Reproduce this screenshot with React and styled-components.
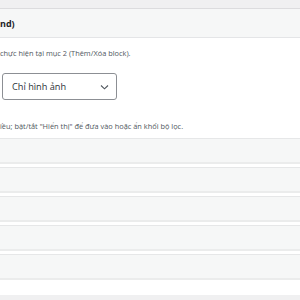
import React from "react";
import styled, { createGlobalStyle } from "styled-components";

const Global = createGlobalStyle`
  html, body { margin: 0; padding: 0; background: #f0f0f1; }
  body { font-family: "Open Sans", "Noto Sans", sans-serif; color: #3c434a; }
  * { box-sizing: border-box; }
`;

const Page = styled.div`
  padding-top: 8px;
  width: 300px;
  overflow: hidden;
`;

const Panel = styled.div`
  background: #fff;
  border-top: 1px solid #dcdcde;
  height: 287px;
  display: flex;
  flex-direction: column;
`;

const Header = styled.div`
  height: 29px;
  background: #f6f7f7;
  border-bottom: 1px solid #e4e5e7;
  display: flex;
  align-items: center;
  font-weight: 700;
  font-size: 9px;
  color: #1d2327;
`;

const Body = styled.div`
  display: flex;
  flex-direction: column;
  align-items: flex-start;
`;

const Note = styled.p`
  margin: ${(p) => p.$mt}px 0 0 0;
  font-size: 7.4px;
  line-height: 12px;
  color: #50575e;
  white-space: nowrap;
`;

const Select = styled.div`
  margin: 14px 0 0 2px;
  width: 115px;
  height: 27px;
  border: 1px solid #8c8f94;
  border-radius: 3px;
  display: flex;
  align-items: center;
  justify-content: space-between;
  padding: 0 7px 0 9px;
  font-size: 9.2px;
  color: #2c3338;
  background: #fff;
`;

const Rows = styled.div`
  margin-top: 6px;
  display: flex;
  flex-direction: column;
  gap: 3px;
  align-self: stretch;
`;

const Row = styled.div`
  height: 26px;
  background: #f6f7f7;
  border-top: 1px solid #e6e7e8;
  border-bottom: 2px solid #ebecec;
`;

const Chevron = () => (
  <svg width="9" height="6" viewBox="0 0 9 6" fill="none">
    <path d="M1 1.5 L4.5 4.8 L8 1.5" stroke="#50575e" strokeWidth="1.1" />
  </svg>
);

export default function App() {
  return (
    <>
      <Global />
      <Page>
        <Panel>
          <Header>nd)</Header>
          <Body>
            <Note $mt={9}>chực hiện tại mục 2 (Thêm/Xóa block).</Note>
            <Select>
              <span>Chỉ hình ảnh</span>
              <Chevron />
            </Select>
            <Note $mt={20}>iều; bật/tắt "Hiển thị" để đưa vào hoặc ẩn khối bộ lọc.</Note>
            <Rows>
              {[0, 1, 2, 3, 4].map((i) => (
                <Row key={i} />
              ))}
            </Rows>
          </Body>
        </Panel>
      </Page>
    </>
  );
}
